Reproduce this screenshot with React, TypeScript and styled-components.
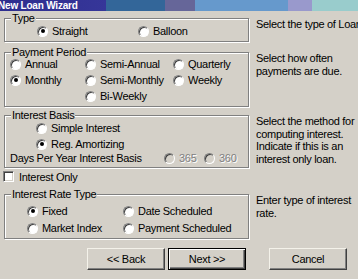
import styled, { createGlobalStyle } from "styled-components";

const GlobalStyle = createGlobalStyle`
    html, body {
        margin: 0;
        padding: 0;
        background: #d4d0c8;
        overflow: hidden;
    }
    body {
        font-family: "Liberation Sans", Arial, sans-serif;
        font-size: 11px;
        letter-spacing: -0.3px;
        color: #000;
    }
`;

export default function App() {
    return (
        <Window>
            <GlobalStyle />
            <TitleBar>New Loan Wizard</TitleBar>
            <Body>
                <Group $mt={1}>
                    <Legend>Type</Legend>
                    <OptionGrid $cols="101px auto" $pl={27} $mt={1}>
                        <Radio label="Straight" checked />
                        <Radio label="Balloon" />
                    </OptionGrid>
                </Group>
                <Description $mt={1}>Select the type of Loan</Description>

                <Group $mt={4}>
                    <Legend>Payment Period</Legend>
                    <OptionGrid $cols="75px 88px auto" $pl={0} $gap={4}>
                        <Radio label="Annual" />
                        <Radio label="Semi-Annual" />
                        <Radio label="Quarterly" />
                        <Radio label="Monthly" checked />
                        <Radio label="Semi-Monthly" />
                        <Radio label="Weekly" />
                        <span />
                        <Radio label="Bi-Weekly" />
                    </OptionGrid>
                </Group>
                <Description $mt={4}>
                    Select how often
                    <br />
                    payments are due.
                </Description>

                <Stack $mt={2}>
                    <Group>
                        <Legend>Interest Basis</Legend>
                        <BasisList>
                            <Radio label="Simple Interest" />
                            <Radio label="Reg. Amortizing" checked />
                        </BasisList>
                        <DaysRow>
                            <span>Days Per Year Interest Basis</span>
                            <Radio label="365" disabled />
                            <Radio label="360" disabled />
                        </DaysRow>
                    </Group>
                    <CheckRow>
                        <CheckBox />
                        Interest Only
                    </CheckRow>
                </Stack>
                <Description $mt={2}>
                    Select the method for
                    <br />
                    computing interest.
                    <br />
                    Indicate if this is an
                    <br />
                    interest only loan.
                </Description>

                <Group $mt={6}>
                    <Legend>Interest Rate Type</Legend>
                    <OptionGrid $cols="96px auto" $pl={17} $gap={5} $mt={5}>
                        <Radio label="Fixed" checked />
                        <Radio label="Date Scheduled" />
                        <Radio label="Market Index" />
                        <Radio label="Payment Scheduled" />
                    </OptionGrid>
                </Group>
                <Description $mt={6}>
                    Enter type of interest
                    <br />
                    rate.
                </Description>
            </Body>
            <ButtonRow>
                <Button>&lt;&lt; Back</Button>
                <Button $default>Next &gt;&gt;</Button>
                <CancelButton>Cancel</CancelButton>
            </ButtonRow>
        </Window>
    );
}

function Radio({ label, checked, disabled }: { label: string; checked?: boolean; disabled?: boolean }) {
    return (
        <Option $disabled={disabled}>
            <RadioDot $checked={checked} $disabled={disabled} />
            {label}
        </Option>
    );
}

const Window = styled.div`
    width: 358px;
    height: 279px;
    background: #d4d0c8;
    overflow: hidden;
`;

const TitleBar = styled.div`
    height: 11px;
    line-height: 11px;
    text-indent: -2px;
    color: #fff;
    font-weight: bold;
    font-size: 10px;
    letter-spacing: -0.2px;
    white-space: nowrap;
    overflow: hidden;
    background: linear-gradient(
        to right,
        #2e2e8e 0,
        #363699 106px,
        #336699 106px,
        #336699 165px,
        #666699 165px,
        #666699 195px,
        #6699cc 195px,
        #6699cc 288px,
        #9999cc 288px,
        #9999cc 312px,
        #99cccc 312px
    );
`;

const Body = styled.div`
    display: grid;
    grid-template-columns: 245px 1fr;
    column-gap: 7px;
    align-items: start;
    padding-left: 4px;
`;

const Group = styled.fieldset<{ $mt?: number }>`
    margin: ${p => p.$mt ?? 0}px 0 0 0;
    padding: 0 5px 3px 5px;
    border: 1px solid #808080;
    box-shadow: inset 1px 1px 0 #fff, 1px 1px 0 #fff;
    min-width: 0;
`;

const Legend = styled.legend`
    padding: 0 1px;
    margin-left: 1px;
    line-height: 12px;
    font-size: 11px;
    background: #d4d0c8;
`;

const OptionGrid = styled.div<{ $cols: string; $pl: number; $gap?: number; $mt?: number }>`
    display: grid;
    grid-template-columns: ${p => p.$cols};
    row-gap: ${p => p.$gap ?? 0}px;
    padding-left: ${p => p.$pl}px;
    margin-top: ${p => p.$mt ?? 0}px;
    padding-bottom: 1px;
`;

const Option = styled.label<{ $disabled?: boolean }>`
    display: flex;
    align-items: center;
    gap: 4px;
    height: 12px;
    white-space: nowrap;
    color: ${p => (p.$disabled ? "#808080" : "#000")};
    text-shadow: ${p => (p.$disabled ? "1px 1px 0 #fff" : "none")};
`;

const RadioDot = styled.span<{ $checked?: boolean; $disabled?: boolean }>`
    position: relative;
    flex: none;
    box-sizing: border-box;
    width: 11px;
    height: 11px;
    border-radius: 50%;
    border: 1px solid;
    border-color: #808080 #ffffff #ffffff #808080;
    box-shadow: inset 1px 1px 0 #404040;
    background: ${p => (p.$disabled ? "#d4d0c8" : "#fff")};
    &::after {
        content: "";
        display: ${p => (p.$checked ? "block" : "none")};
        position: absolute;
        left: 2.5px;
        top: 2.5px;
        width: 4px;
        height: 4px;
        border-radius: 50%;
        background: #000;
    }
`;

const Description = styled.div<{ $mt?: number }>`
    margin-top: ${p => p.$mt ?? 0}px;
    padding-top: 6px;
    line-height: 12.5px;
    white-space: nowrap;
    overflow: hidden;
`;

const Stack = styled.div<{ $mt?: number }>`
    display: flex;
    flex-direction: column;
    margin-top: ${p => p.$mt ?? 0}px;
`;

const BasisList = styled.div`
    display: flex;
    flex-direction: column;
    gap: 4px;
    padding-left: 26px;
    margin-top: 1px;
`;

const DaysRow = styled.div`
    display: grid;
    grid-template-columns: 154px 40px auto;
    align-items: center;
    height: 12px;
    margin-top: 2px;
    white-space: nowrap;
`;

const CheckRow = styled.label`
    display: flex;
    align-items: center;
    gap: 5px;
    height: 11px;
    margin: 3px 0 0 -1px;
`;

const CheckBox = styled.span`
    box-sizing: border-box;
    width: 11px;
    height: 11px;
    background: #fff;
    border: 1px solid;
    border-color: #808080 #fff #fff #808080;
    box-shadow: inset 1px 1px 0 #404040, inset -1px -1px 0 #d4d0c8;
`;

const ButtonRow = styled.div`
    display: flex;
    justify-content: flex-end;
    gap: 3px;
    padding-right: 11px;
    margin-top: 9px;
`;

const Button = styled.button<{ $default?: boolean }>`
    box-sizing: border-box;
    width: 78px;
    height: 22px;
    padding: 0;
    font-family: "Liberation Sans", Arial, sans-serif;
    font-size: 11px;
    letter-spacing: -0.3px;
    color: #000;
    background: #d4d0c8;
    border: 1px solid;
    border-color: ${p => (p.$default ? "#000" : "#f4f2ea #404040 #404040 #f4f2ea")};
    box-shadow: ${p =>
        p.$default
            ? "inset 1px 1px 0 #fff, inset -1px -1px 0 #404040, inset -2px -2px 0 #808080"
            : "inset -1px -1px 0 #808080"};
`;

const CancelButton = styled(Button)`
    margin-left: 20px;
`;
